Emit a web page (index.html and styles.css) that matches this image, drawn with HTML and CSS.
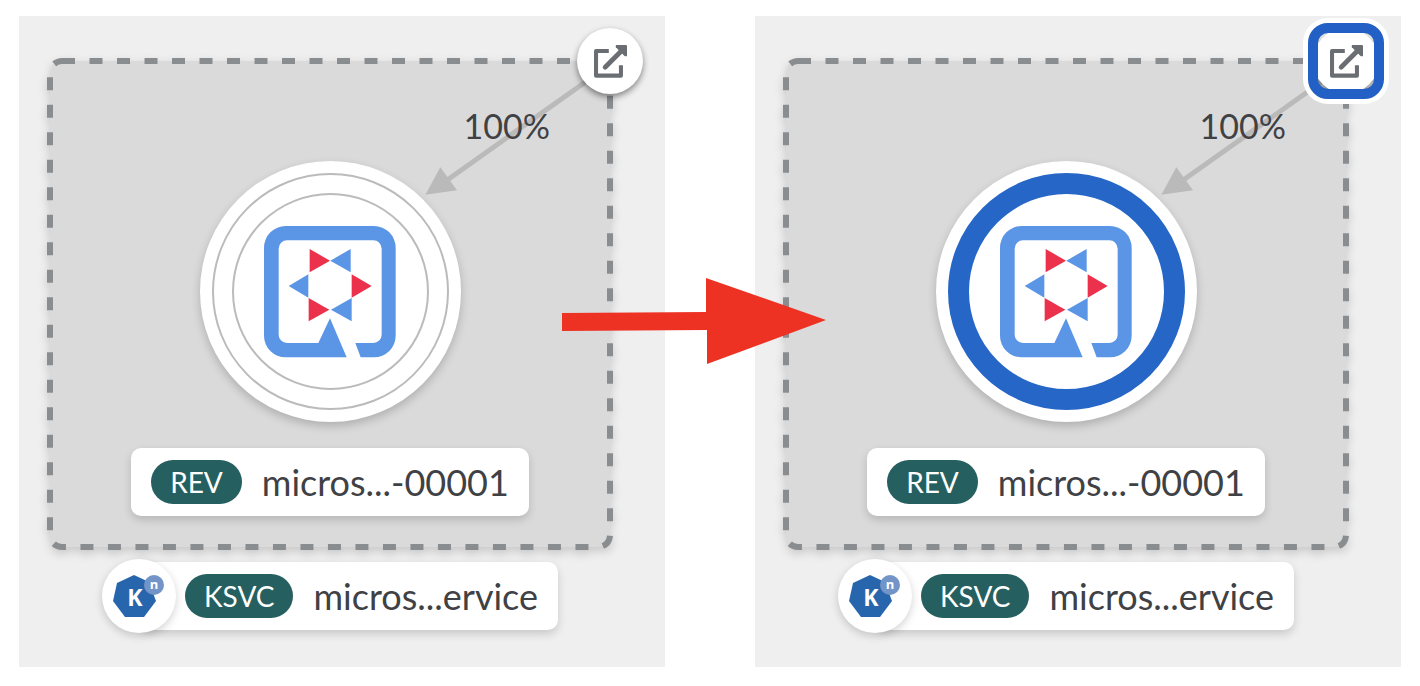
FILE: index.html
```html
<!DOCTYPE html>
<html lang="en">
<head>
<meta charset="utf-8">
<title>Topology decorator focus</title>
<link rel="stylesheet" href="styles.css">
</head>
<body>
<svg class="symbols" aria-hidden="true">
  <symbol id="quarkus" viewBox="222 226 396 396">
    <path fill="#5b95e6" fill-rule="evenodd" d="M287 226H552A65 65 0 0 1 617 291V555A65 65 0 0 1 552 620H512L496 577H550A25 25 0 0 0 575 552V294A25 25 0 0 0 550 269H291A25 25 0 0 0 266 294V552A25 25 0 0 0 291 577H385L420 503L470 620H287A65 65 0 0 1 222 555V291A65 65 0 0 1 287 226Z"/>
    <path fill="#5b95e6" d="M421 330L482 295V365ZM296 406L355 371V441ZM423 477L485 442V512Z"/>
    <path fill="#ec314d" d="M420 330L359 295V365ZM545 406L485 371V441ZM418 477L356 442V512Z"/>
  </symbol>
  <symbol id="external" viewBox="583 103 98 98">
    <path fill="none" stroke="#6a6e73" stroke-width="12" stroke-linejoin="round" d="M627 121H589V194H663V163"/>
    <path fill="none" stroke="#6a6e73" stroke-width="14" stroke-linecap="round" d="M616 169L662 123"/>
    <path fill="#6a6e73" d="M649 103H678Q681 103 681 106V136Q676 138 672 134L648 110Q646 106 649 103Z"/>
  </symbol>
  <symbol id="edge" viewBox="71 152 561 408">
    <path stroke="#bababa" stroke-width="15" d="M625 168L145 508"/>
    <path fill="#bababa" d="M78 553L123 471L173 540Z"/>
  </symbol>
</svg>

<main class="comparison">
  <section class="panel">
    <div class="group">
      <svg class="group-outline" aria-hidden="true"><rect width="100%" height="100%" rx="12" stroke-dasharray="13 14.5"/></svg>
      <svg class="edge" aria-hidden="true"><use href="#edge"/></svg>
      <span class="traffic">100%</span>
      <div class="node"><svg class="logo" role="img" aria-label="Quarkus"><use href="#quarkus"/></svg></div>
      <div class="label"><span class="badge">REV</span><span>micros...-00001</span></div>
      <a class="decorator" href="#" aria-label="Open URL"><svg aria-hidden="true"><use href="#external"/></svg></a>
    </div>
    <div class="service">
      <div class="service-icon">
        <svg viewBox="0 0 74 74" role="img" aria-label="Knative">
          <path fill="#2766ad" d="M32 16L47 23L54 42L42 58H23L11 42L15 24Z"/>
          <circle cx="52" cy="26" r="10" fill="#7394c7"/>
          <text x="33" y="47" class="glyph glyph-k">K</text>
          <text x="52" y="30" class="glyph glyph-n">n</text>
        </svg>
      </div>
      <div class="label label-service"><span class="badge">KSVC</span><span>micros...ervice</span></div>
    </div>
  </section>

  <section class="panel">
    <div class="group">
      <svg class="group-outline" aria-hidden="true"><rect width="100%" height="100%" rx="12" stroke-dasharray="13 14.5"/></svg>
      <svg class="edge" aria-hidden="true"><use href="#edge"/></svg>
      <span class="traffic">100%</span>
      <div class="node node-active"><svg class="logo" role="img" aria-label="Quarkus"><use href="#quarkus"/></svg></div>
      <div class="label"><span class="badge">REV</span><span>micros...-00001</span></div>
      <a class="decorator decorator-focused" href="#" aria-label="Open URL"><svg aria-hidden="true"><use href="#external"/></svg></a>
    </div>
    <div class="service">
      <div class="service-icon">
        <svg viewBox="0 0 74 74" role="img" aria-label="Knative">
          <path fill="#2766ad" d="M32 16L47 23L54 42L42 58H23L11 42L15 24Z"/>
          <circle cx="52" cy="26" r="10" fill="#7394c7"/>
          <text x="33" y="47" class="glyph glyph-k">K</text>
          <text x="52" y="30" class="glyph glyph-n">n</text>
        </svg>
      </div>
      <div class="label label-service"><span class="badge">KSVC</span><span>micros...ervice</span></div>
    </div>
  </section>

  <svg class="arrow" viewBox="0 0 264 87" aria-hidden="true"><path fill="#ed3224" d="M0 35L144 34V0L264 42L145 86V52L0 53Z"/></svg>
</main>
</body>
</html>
```
FILE: styles.css
```css
* { box-sizing: border-box; }
body {
  margin: 0;
  background: #fff;
  color: #3f4145;
  font-family: Lato, "Liberation Sans", sans-serif;
  font-size: 36px;
  line-height: 44px;
}
svg { display: block; }
.symbols { position: absolute; width: 0; height: 0; }
.comparison {
  position: relative;
  display: grid;
  grid-template-columns: 1fr 1fr;
  gap: 90px;
  padding: 16px 19px;
}
.panel {
  padding: 45px 55px 34px 31px;
  background: #efefef;
}
.group {
  position: relative;
  display: flex;
  flex-direction: column;
  align-items: center;
  gap: 26px;
  padding: 100px 0 31px;
}
.group-outline {
  position: absolute;
  inset: 0;
  width: 100%;
  height: 100%;
  overflow: visible;
  filter: drop-shadow(0 4px 5px rgba(3, 3, 3, 0.16));
}
.group-outline rect {
  fill: #dadada;
  stroke: #8a8d90;
  stroke-width: 6px;
}
.edge {
  position: absolute;
  top: 0;
  right: 0;
  width: 187px;
  height: 136px;
}
.traffic {
  position: absolute;
  top: 43px;
  right: 60px;
  font-size: 34px;
}
.node {
  position: relative;
  display: grid;
  place-items: center;
  width: 261px;
  height: 261px;
  border-radius: 50%;
  background: #fff;
  box-shadow: 0 4px 10px rgba(3, 3, 3, 0.2);
}
.node::before,
.node::after {
  content: "";
  position: absolute;
  inset: 12px;
  border: 2px solid #bbb;
  border-radius: 50%;
}
.node::after { inset: 32px; }
.node-active::before { border: 21px solid #2666c7; }
.node-active::after { display: none; }
.logo { width: 132px; height: 132px; }
.label {
  position: relative;
  display: flex;
  align-items: center;
  gap: 20px;
  height: 68px;
  padding: 0 20px;
  border-radius: 10px;
  background: #fff;
  box-shadow: 0 4px 8px rgba(3, 3, 3, 0.16);
  white-space: nowrap;
}
.badge {
  padding: 0 19px;
  border-radius: 22px;
  background: #265f60;
  color: #fff;
  font-size: 28px;
}
.decorator {
  position: absolute;
  top: -33px;
  right: -33px;
  display: grid;
  place-items: center;
  width: 66px;
  height: 66px;
  border-radius: 50%;
  background: #fff;
  box-shadow: 0 3px 6px rgba(3, 3, 3, 0.45);
}
.decorator svg { width: 33px; height: 33px; }
.decorator-focused::after {
  content: "";
  position: absolute;
  inset: -5px;
  border: 10px solid #2360c5;
  border-radius: 20px;
  box-shadow: 0 0 0 5px #fff;
}
.service {
  display: flex;
  align-items: center;
  justify-content: center;
  margin-top: 12px;
}
.service-icon {
  position: relative;
  z-index: 1;
  width: 74px;
  height: 74px;
  margin-right: -36px;
  border-radius: 50%;
  background: #fff;
  box-shadow: 0 3px 8px rgba(3, 3, 3, 0.18);
}
.service-icon svg { width: 74px; height: 74px; }
.label-service { padding-left: 45px; }
.glyph {
  fill: #fff;
  font-family: "Open Sans", sans-serif;
  font-weight: 700;
  text-anchor: middle;
}
.glyph-k { font-size: 23px; }
.glyph-n { font-size: 13px; }
.arrow {
  position: absolute;
  top: 278px;
  left: calc(50% - 148px);
  width: 264px;
  height: 87px;
}
```
